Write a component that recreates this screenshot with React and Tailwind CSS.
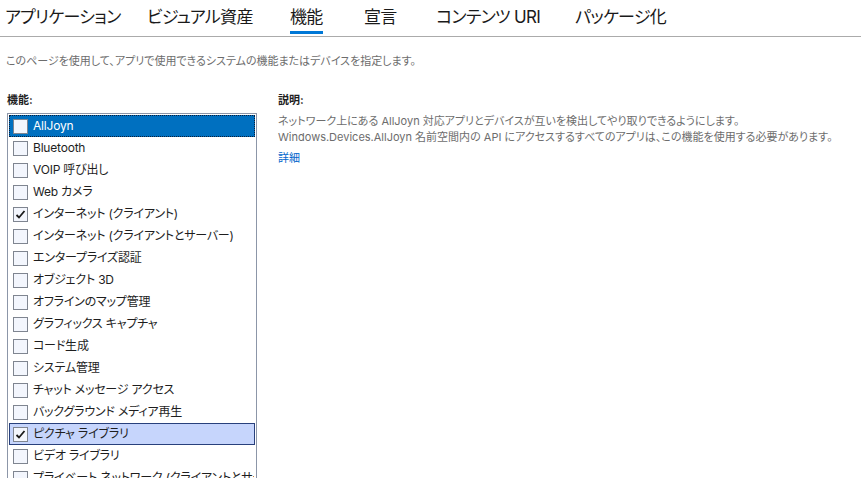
import React from 'react';

const tabs = [
  { label: 'アプリケーション', w: 'w-[142px]' },
  { label: 'ビジュアル資産', w: 'w-[143px]' },
  { label: '機能', w: 'w-[74px]', active: true },
  { label: '宣言', w: 'w-[72px]' },
  { label: 'コンテンツ URI', w: 'w-[139px]' },
  { label: 'パッケージ化', w: 'w-[120px]' },
];

const capabilities = [
  { name: 'AllJoyn', checked: false, state: 'focus' },
  { name: 'Bluetooth', checked: false },
  { name: 'VOIP 呼び出し', checked: false },
  { name: 'Web カメラ', checked: false },
  { name: 'インターネット (クライアント)', checked: true },
  { name: 'インターネット (クライアントとサーバー)', checked: false },
  { name: 'エンタープライズ認証', checked: false },
  { name: 'オブジェクト 3D', checked: false },
  { name: 'オフラインのマップ管理', checked: false },
  { name: 'グラフィックス キャプチャ', checked: false },
  { name: 'コード生成', checked: false },
  { name: 'システム管理', checked: false },
  { name: 'チャット メッセージ アクセス', checked: false },
  { name: 'バックグラウンド メディア再生', checked: false },
  { name: 'ピクチャ ライブラリ', checked: true, state: 'hover' },
  { name: 'ビデオ ライブラリ', checked: false },
  { name: 'プライベート ネットワーク (クライアントとサーバー)', checked: false },
];

const font = "font-['Inter','Noto_Sans_CJK_JP',sans-serif] [font-feature-settings:'palt']";

function Checkbox({ checked }) {
  return (
    <div className="w-[15px] h-[15px] border border-[#7f8590] bg-[#f3f6fd] flex items-center justify-center shrink-0">
      {checked && (
        <svg width="11" height="11" viewBox="0 0 11 11">
          <path d="M1.5 6 L4 8.5 L9.5 2" fill="none" stroke="#1a1a1a" strokeWidth="1.8" />
        </svg>
      )}
    </div>
  );
}

function Row({ item }) {
  let cls = 'border border-transparent';
  let text = 'text-[#1e1e1e]';
  if (item.state === 'focus') {
    cls = 'bg-[#0070c0] border border-dotted border-[#0b1f3a]';
    text = 'text-white';
  } else if (item.state === 'hover') {
    cls = 'bg-[#c6d5fc] border border-[#28407c]';
  }
  return (
    <div className={`h-[22px] flex items-center gap-[5px] pl-[3px] overflow-hidden ${cls}`}>
      <Checkbox checked={item.checked} />
      <span className={`text-[12px] whitespace-nowrap tracking-[-0.2px] ${text}`}>{item.name}</span>
    </div>
  );
}

export default function App() {
  return (
    <div className={`w-[861px] h-[478px] overflow-hidden bg-white ${font}`}>
      <div className="flex pl-[5px] h-[37px] border-b border-[#ababab]">
        {tabs.map((t) => (
          <div key={t.label} className={`${t.w} shrink-0`}>
            <div className="inline-flex flex-col justify-between h-full pt-[6px]">
              <span className="text-[17px] leading-[23px] tracking-[-0.7px] text-[#1a1a1a] whitespace-nowrap">{t.label}</span>
              <div className={`h-[3px] mb-[2px] ${t.active ? 'bg-[#0078d7]' : ''}`} />
            </div>
          </div>
        ))}
      </div>

      <p className="text-[11px] text-[#6d6d6d] pl-[6px] mt-[16px] leading-[16px]">
        このページを使用して、アプリで使用できるシステムの機能またはデバイスを指定します。
      </p>

      <div className="flex mt-[24px]">
        <div className="w-[270px] pl-[7px]">
          <div className="text-[11px] font-bold text-[#1e1e1e] leading-[14px]">機能:</div>
          <div className="mt-[6px] w-[250px] border border-[#8c96a8] bg-white p-px h-[400px] overflow-hidden">
            {capabilities.map((c) => (
              <Row key={c.name} item={c} />
            ))}
          </div>
        </div>

        <div className="pl-[8px]">
          <div className="text-[11px] font-bold text-[#1e1e1e] leading-[14px]">説明:</div>
          <div className="mt-[6px] text-[11px] text-[#6d6d6d] leading-[16px]">
            <p>ネットワーク上にある AllJoyn 対応アプリとデバイスが互いを検出してやり取りできるようにします。</p>
            <p>Windows.Devices.AllJoyn 名前空間内の API にアクセスするすべてのアプリは、この機能を使用する必要があります。</p>
          </div>
          <a className="block mt-[6px] text-[11px] text-[#0066cc] leading-[14px]">詳細</a>
        </div>
      </div>
    </div>
  );
}
